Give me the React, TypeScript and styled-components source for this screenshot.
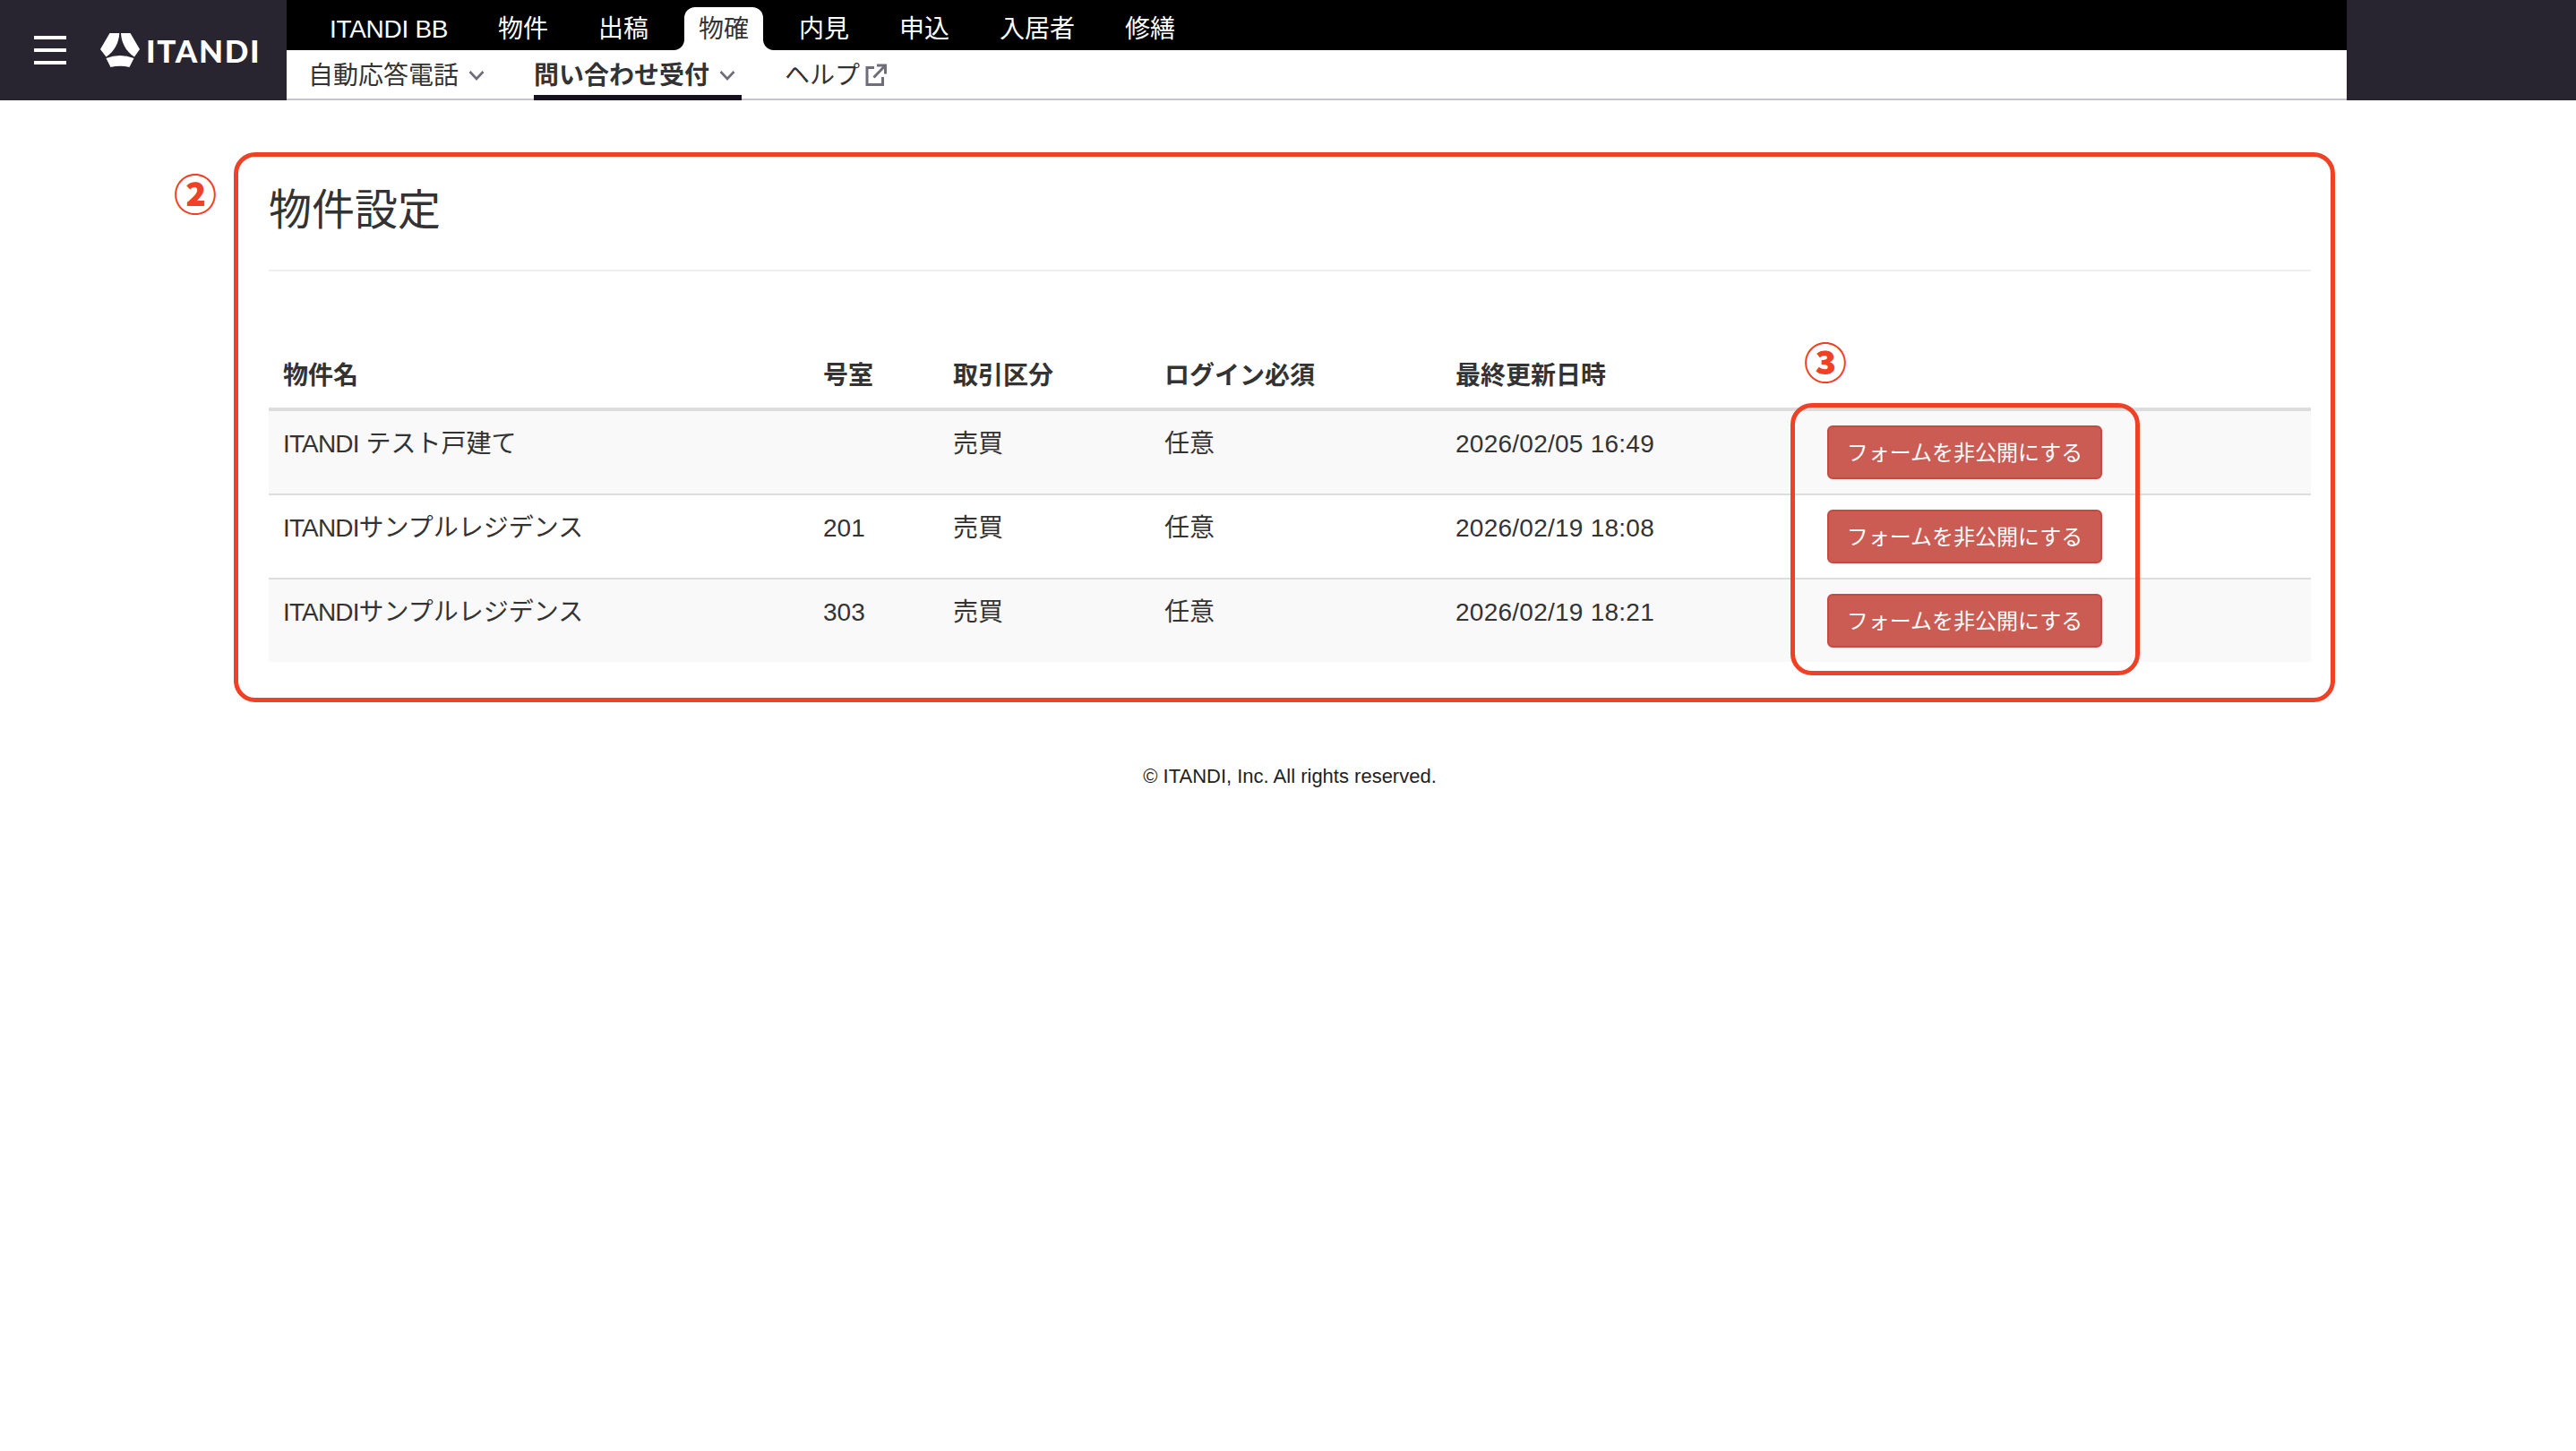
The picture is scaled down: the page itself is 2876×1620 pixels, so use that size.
import React from "react";
import styled, { createGlobalStyle, css } from "styled-components";

const Global = createGlobalStyle`
  * { box-sizing: border-box; }
  body {
    margin: 0;
    background: #fff;
    color: #333;
    font-family: "Liberation Sans", "Noto Sans CJK JP", sans-serif;
    font-size: 28px;
    line-height: 40px;
  }
`;

const Page = styled.div`
  position: relative;
  width: 2876px;
  height: 1620px;
  overflow: hidden;
`;

const Header = styled.header`
  display: flex;
  height: 112px;
  background: #282530;
`;

const Brand = styled.div`
  display: flex;
  align-items: center;
  width: 320px;
  padding-left: 38px;
`;

const Burger = styled.button`
  display: flex;
  flex-direction: column;
  gap: 10px;
  width: 36px;
  padding: 0;
  border: 0;
  background: none;
`;

const BurgerBar = styled.span`
  height: 4px;
  background: #fff;
`;

const Mark = styled.svg`
  width: 44px;
  height: 38px;
  margin-left: 38px;
`;

const Wordmark = styled.span`
  margin-left: 7px;
  padding-bottom: 1px;
  color: #fff;
  font-family: Lato, sans-serif;
  font-weight: 900;
  font-size: 35px;
  line-height: 40px;
  letter-spacing: 1.7px;
`;

const Navs = styled.div`
  display: flex;
  flex-direction: column;
  width: 2300px;
`;

const TopNav = styled.nav`
  display: flex;
  align-items: flex-end;
  gap: 24px;
  height: 56px;
  padding-left: 32px;
  background: #000;
`;

const TopItem = styled.a<{ $active?: boolean; $latin?: boolean }>`
  position: relative;
  height: 48px;
  padding: 0 16px;
  line-height: 49px;
  white-space: nowrap;
  color: #fff;
  ${(p) =>
    p.$latin &&
    css`
      width: 164px;
      letter-spacing: -0.3px;
    `}
  ${(p) =>
    p.$active &&
    css`
      color: #333;
      background: #fff;
      border-radius: 12px 12px 0 0;
      &::before,
      &::after {
        content: "";
        position: absolute;
        bottom: 0;
        width: 12px;
        height: 12px;
      }
      &::before {
        left: -12px;
        background: radial-gradient(circle at 0 0, transparent 11.5px, #fff 12.5px);
      }
      &::after {
        right: -12px;
        background: radial-gradient(circle at 100% 0, transparent 11.5px, #fff 12.5px);
      }
    `}
`;

const SubNav = styled.nav`
  display: flex;
  gap: 48px;
  height: 56px;
  padding-left: 24px;
  background: #fff;
  box-shadow: inset 0 -2px #c5c3cb;
`;

const SubItem = styled.a<{ $active?: boolean }>`
  display: flex;
  align-items: center;
  gap: 4px;
  height: 56px;
  padding-top: 1px;
  font-weight: ${(p) => (p.$active ? 700 : 400)};
  box-shadow: ${(p) => (p.$active ? "inset 0 -6px #15111f" : "none")};
`;

const SubIcon = styled.svg`
  width: 32px;
  height: 32px;
  margin-bottom: 2px;
  fill: none;
  stroke: #6f6d79;
`;

const Main = styled.main`
  padding: 0 296px 0 300px;
`;

const Title = styled.h3`
  margin: 0;
  padding: 94px 0 38px;
  font-size: 48px;
  line-height: 57px;
  font-weight: 400;
  border-bottom: 2px solid #eee;
`;

const columns = "603px 145px 236px 325px 415px 1fr";

const Table = styled.div`
  padding-top: 80px;
`;

const HeadRow = styled.div`
  display: grid;
  grid-template-columns: ${columns};
  height: 76px;
  border-bottom: 4px solid #ddd;
  font-weight: 700;
`;

const Row = styled.div<{ $odd: boolean; $first: boolean }>`
  display: grid;
  grid-template-columns: ${columns};
  height: ${(p) => (p.$first ? 92 : 94)}px;
  border-top: ${(p) => (p.$first ? "0" : "2px solid #ddd")};
  background: ${(p) => (p.$odd ? "#f9f9f9" : "#fff")};
`;

const Cell = styled.div`
  padding: 17px 16px 0;
  white-space: nowrap;
`;

const HeadCell = styled(Cell)`
  padding-top: 17px;
`;

const DateCell = styled(Cell)`
  letter-spacing: 0.25px;
`;

const ActionCell = styled(Cell)`
  padding-top: 16px;
`;

const Latin = styled.span`
  letter-spacing: -0.85px;
`;

const DangerButton = styled.button`
  display: block;
  width: 307px;
  height: 60px;
  padding: 0;
  border: 2px solid #c54b42;
  border-radius: 6px;
  background: #ca5c54;
  color: #fff;
  font: 24px/55px "Liberation Sans", "Noto Sans CJK JP", sans-serif;
  text-align: center;
  white-space: nowrap;
`;

const Footer = styled.footer`
  padding-top: 108px;
  color: #222;
  font-size: 22px;
  line-height: 40px;
  text-align: center;
`;

const Outline = styled.div<{ $x: number; $y: number; $w: number; $h: number }>`
  position: absolute;
  left: ${(p) => p.$x}px;
  top: ${(p) => p.$y}px;
  width: ${(p) => p.$w}px;
  height: ${(p) => p.$h}px;
  border: 5px solid #ee4126;
  border-radius: 24px;
  pointer-events: none;
`;

const Marker = styled.span<{ $x: number; $y: number }>`
  position: absolute;
  left: ${(p) => p.$x}px;
  top: ${(p) => p.$y}px;
  color: #ee4126;
  font-family: "Noto Sans CJK JP", sans-serif;
  font-weight: 900;
  font-size: 48px;
  line-height: 48px;
`;

const Chevron = () => (
  <SubIcon viewBox="0 0 32 32" strokeWidth="2.6">
    <path d="M8.5 12 L16 20 L23.5 12" />
  </SubIcon>
);

const External = () => (
  <SubIcon viewBox="0 0 32 32" strokeWidth="3">
    <path d="M12 7.5 H4 V26.5 H21.5 V18" />
    <path d="M15 5 H24.5 V14.5 M24.5 5 L11.5 18.5" />
  </SubIcon>
);

const topItems = ["物件", "出稿", "物確", "内見", "申込", "入居者", "修繕"];

const rows = [
  { brand: "ITANDI", name: " テスト戸建て", room: "", updated: "2026/02/05 16:49" },
  { brand: "ITANDI", name: "サンプルレジデンス", room: "201", updated: "2026/02/19 18:08" },
  { brand: "ITANDI", name: "サンプルレジデンス", room: "303", updated: "2026/02/19 18:21" },
];

export default function App() {
  return (
    <Page>
      <Global />
      <Header>
        <Brand>
          <Burger aria-label="メニュー">
            <BurgerBar />
            <BurgerBar />
            <BurgerBar />
          </Burger>
          <Mark viewBox="0 0 44 38" fill="#fff">
            <path d="M10.5 0 H21.3 C20.8 10 16 20.5 6.5 26.5 L0 18 Z" />
            <path d="M23 0 H33.5 L44 18 L38 26.5 C28 20 23.5 10 23 0 Z" />
            <path d="M6.5 28 Q22 22 37.5 28 L32.5 38 Q22 35.5 11.5 38 Z" />
          </Mark>
          <Wordmark>ITANDI</Wordmark>
        </Brand>
        <Navs>
          <TopNav>
            <TopItem $latin>ITANDI BB</TopItem>
            {topItems.map((t) => (
              <TopItem key={t} $active={t === "物確"}>
                {t}
              </TopItem>
            ))}
          </TopNav>
          <SubNav>
            <SubItem>
              自動応答電話
              <Chevron />
            </SubItem>
            <SubItem $active>
              問い合わせ受付
              <Chevron />
            </SubItem>
            <SubItem>
              ヘルプ
              <External />
            </SubItem>
          </SubNav>
        </Navs>
      </Header>
      <Main>
        <Title>物件設定</Title>
        <Table>
          <HeadRow>
            <HeadCell>物件名</HeadCell>
            <HeadCell>号室</HeadCell>
            <HeadCell>取引区分</HeadCell>
            <HeadCell>ログイン必須</HeadCell>
            <HeadCell>最終更新日時</HeadCell>
            <HeadCell />
          </HeadRow>
          {rows.map((r, i) => (
            <Row key={r.updated} $odd={i % 2 === 0} $first={i === 0}>
              <Cell>
                <Latin>{r.brand}</Latin>
                {r.name}
              </Cell>
              <Cell>{r.room}</Cell>
              <Cell>売買</Cell>
              <Cell>任意</Cell>
              <DateCell>{r.updated}</DateCell>
              <ActionCell>
                <DangerButton>フォームを非公開にする</DangerButton>
              </ActionCell>
            </Row>
          ))}
        </Table>
        <Footer>© ITANDI, Inc. All rights reserved.</Footer>
      </Main>
      <Outline $x={261} $y={170} $w={2346} $h={614} />
      <Outline $x={1999} $y={450} $w={390} $h={304} />
      <Marker $x={194} $y={190}>②</Marker>
      <Marker $x={2014} $y={378}>③</Marker>
    </Page>
  );
}
